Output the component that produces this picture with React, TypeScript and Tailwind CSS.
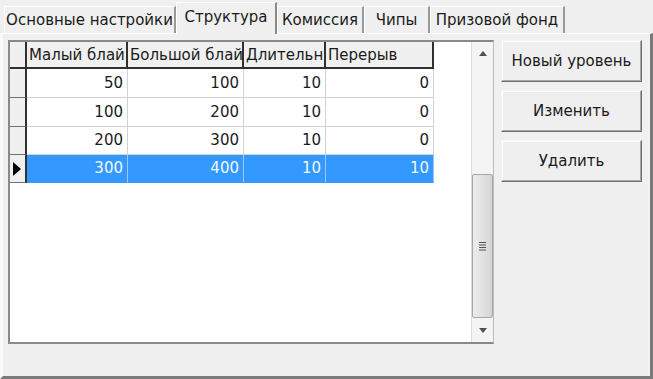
import React from "react";

const tabs = [
  { label: "Основные настройки", w: 172 },
  { label: "Структура", w: 101, active: true },
  { label: "Комиссия", w: 87 },
  { label: "Чипы", w: 66 },
  { label: "Призовой фонд", w: 135 },
];

const cols = [
  { label: "Малый блай", w: 101 },
  { label: "Большой блай", w: 116 },
  { label: "Длительн", w: 82 },
  { label: "Перерыв", w: 108 },
];

const rows = [
  { cells: [50, 100, 10, 0], h: 29 },
  { cells: [100, 200, 10, 0], h: 29 },
  { cells: [200, 300, 10, 0], h: 28 },
  { cells: [300, 400, 10, 10], h: 28, selected: true },
];

function WinButton({ children }: { children: React.ReactNode }) {
  return (
    <button className="h-[42px] w-[141px] border border-t-[#f4f4f4] border-l-[#f4f4f4] border-r-[#6e6e6e] border-b-[#6e6e6e] bg-[#efefef] text-[15px] text-[#1b1b1b] shadow-[inset_-1px_-1px_0_#a8a8a8,inset_1px_1px_0_#ffffff]">
      {children}
    </button>
  );
}

export default function App() {
  return (
    <div
      className="flex h-[379px] w-[653px] flex-col overflow-hidden bg-[#f0f0f0] text-[#1b1b1b]"
      style={{ fontFamily: '"DejaVu Sans", Tahoma, sans-serif' }}
    >
      {/* Tabs */}
      <div className="flex h-[33px] items-end pl-[4px]">
        {tabs.map((t) => (
          <div
            key={t.label}
            style={{ width: t.w }}
            className={
              t.active
                ? "relative z-10 -mb-px flex h-[32px] items-center justify-center border-l border-t border-r-2 border-l-white border-t-white border-r-[#8a8a8a] bg-[#f0f0f0] pb-[2px] text-[15px]"
                : "flex h-[27px] items-center justify-center border-l border-t border-r-2 border-l-white border-t-white border-r-[#9a9a9a] bg-[#f0f0f0] text-[15px]"
            }
          >
            {t.label}
          </div>
        ))}
      </div>

      {/* Panel */}
      <div className="flex flex-1 border-l-[3px] border-t border-r-[3px] border-b-[3px] border-l-[#fafafa] border-t-white border-r-[#7a7a7a] border-b-[#7a7a7a] pl-[5px] pt-[6px]">
        {/* Grid */}
        <div className="flex h-[304px] w-[486px] border-l-2 border-t-2 border-r border-b-2 border-l-[#8a8a8a] border-t-[#8a8a8a] border-r-[#bcbcbc] border-b-[#8a8a8a] bg-white">
          <div className="flex w-[461px] flex-col">
            {/* Header */}
            <div className="flex h-[27px]">
              <div className="w-[17px] border-r-2 border-b-2 border-r-[#303030] border-b-[#303030] bg-[#f0f0f0]" />
              {cols.map((c) => (
                <div
                  key={c.label}
                  style={{ width: c.w }}
                  className="overflow-hidden whitespace-nowrap border-r-2 border-b-2 border-r-[#303030] border-b-[#303030] bg-[#f0f0f0] pl-[2px] pt-[2px] text-[15px] leading-[22px]"
                >
                  {c.label}
                </div>
              ))}
            </div>
            {rows.map((r, i) => (
              <div key={i} className="flex" style={{ height: r.h }}>
                <div className="flex w-[17px] items-center border-r-2 border-b border-r-[#303030] border-b-[#707070] bg-[#f0f0f0] pl-[2px]">
                  {r.selected && (
                    <svg width="9" height="14" viewBox="0 0 9 14">
                      <path d="M1 0 L9 7 L1 14 Z" fill="#000" />
                    </svg>
                  )}
                </div>
                {r.cells.map((v, j) => (
                  <div
                    key={j}
                    style={{ width: cols[j].w }}
                    className={
                      r.selected
                        ? "flex items-center justify-end border-r border-b border-r-[#9cc8f5] border-b-[#3399ff] bg-[#3399ff] pr-[4px] text-[15px] text-[#f2f8ff]"
                        : "flex items-center justify-end border-r border-b border-r-[#d2d2d2] border-b-[#d2d2d2] pr-[4px] text-[15px]"
                    }
                  >
                    {v}
                  </div>
                ))}
              </div>
            ))}
          </div>

          {/* Scrollbar */}
          <div className="flex w-[22px] flex-col border-l border-[#dcdcdc] bg-[#f4f4f4]">
            <div className="flex h-[22px] items-center justify-center">
              <svg width="8" height="5" viewBox="0 0 8 5">
                <path d="M0 5 L4 0 L8 5 Z" fill="#505050" />
              </svg>
            </div>
            <div className="h-[110px]" />
            <div className="flex h-[144px] items-center justify-center rounded-[2px] border border-[#a6a6a6] bg-gradient-to-r from-[#ececec] via-[#e2e2e2] to-[#d4d4d4]">
              <svg width="10" height="10" viewBox="0 0 10 10">
                <path d="M1 1.5 H8 M1 4 H8 M1 6.5 H8 M1 9 H8" stroke="#555" strokeWidth="1.2" />
              </svg>
            </div>
            <div className="flex flex-1 items-center justify-center">
              <svg width="8" height="5" viewBox="0 0 8 5">
                <path d="M0 0 L8 0 L4 5 Z" fill="#505050" />
              </svg>
            </div>
          </div>
        </div>

        {/* Buttons */}
        <div className="ml-[7px] flex flex-col gap-[8px]">
          <WinButton>Новый уровень</WinButton>
          <WinButton>Изменить</WinButton>
          <WinButton>Удалить</WinButton>
        </div>
      </div>
    </div>
  );
}
